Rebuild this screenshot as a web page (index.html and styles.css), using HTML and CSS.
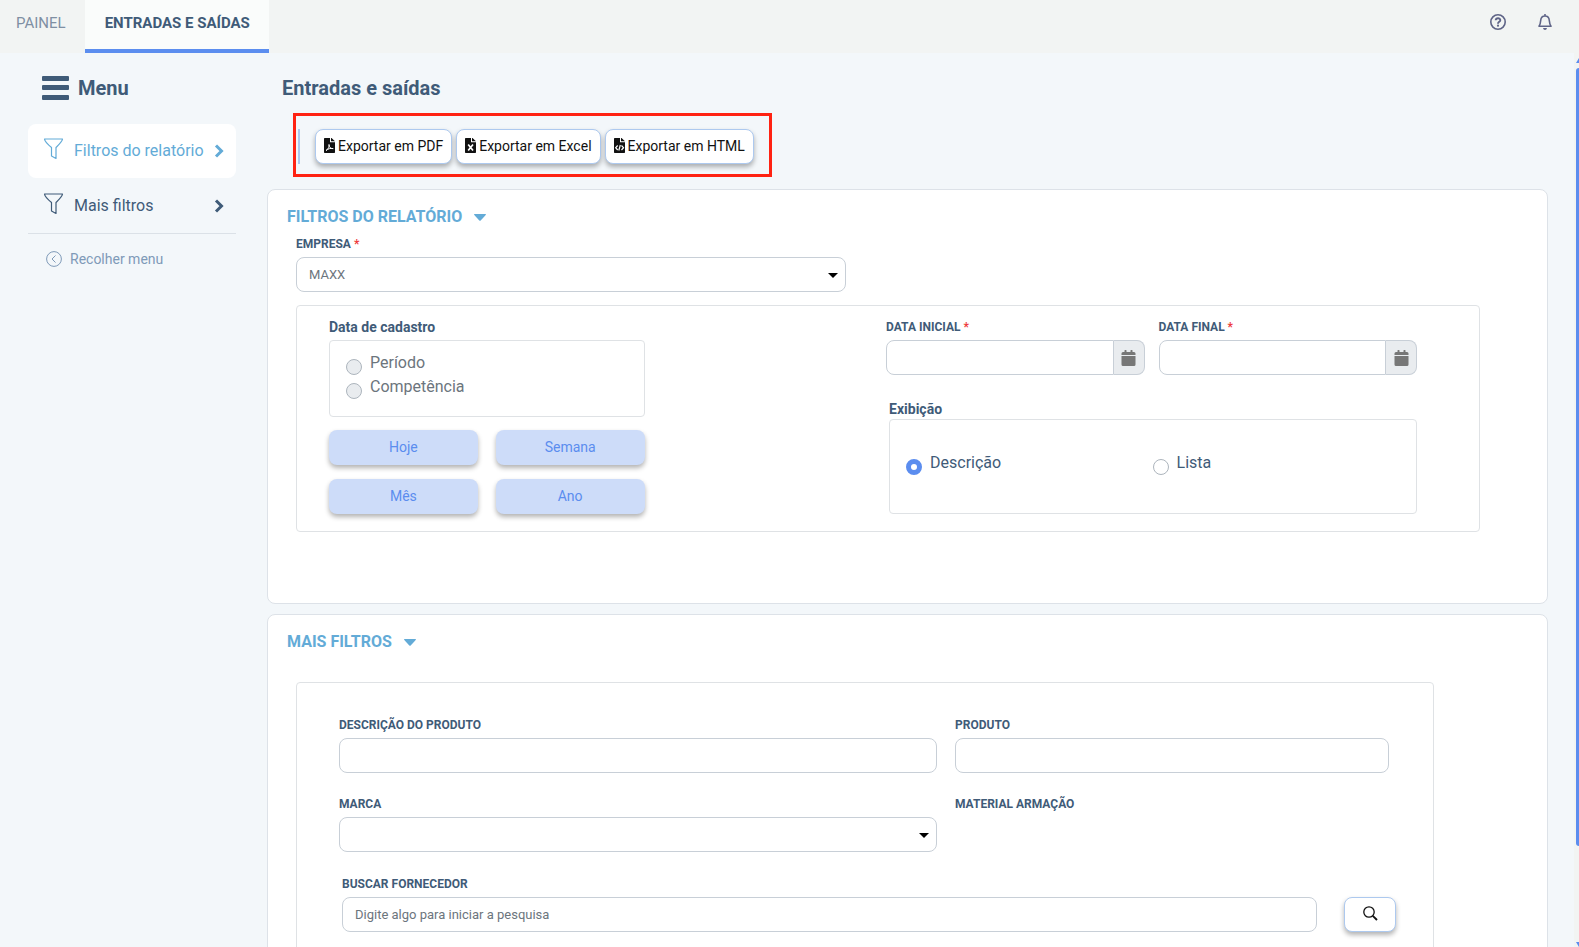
FILE: index.html
```html
<!DOCTYPE html>
<html lang="pt-BR">
<head>
<meta charset="utf-8">
<title>Entradas e saídas</title>
<link rel="stylesheet" href="styles.css">
</head>
<body>
<svg class="sprite" aria-hidden="true">
  <symbol id="funnel" viewBox="0 0 20 22"><path d="M1 1H19C18.800 3.500 15 7 12.500 9.500V20.500L8 18V9.500C5 7 1.200 3.500 1 1Z" fill="none" stroke="currentColor" stroke-width="1.200" stroke-linejoin="round"/></symbol>
  <symbol id="chevron" viewBox="0 0 10 14"><path d="M2 1.500L7.500 7L2 12.500" fill="none" stroke="currentColor" stroke-width="3"/></symbol>
  <symbol id="caret" viewBox="0 0 12 7"><path d="M0.500 0H11.500Q12.300 0.300 11.700 1L6.700 6.500Q6 7.100 5.300 6.500L0.300 1Q-0.300 0.300 0.500 0Z" fill="currentColor"/></symbol>
  <symbol id="calendar" viewBox="0 0 14 16"><path d="M1.500 2H3V0.500Q3 0 3.500 0H4.500Q5 0 5 0.500V2H9V0.500Q9 0 9.500 0H10.500Q11 0 11 0.500V2H12.500Q14 2 14 3.500V5H0V3.500Q0 2 1.500 2ZM0 6H14V14.500Q14 16 12.500 16H1.500Q0 16 0 14.500Z" fill="currentColor"/></symbol>
  <symbol id="sheet" viewBox="0 0 11 15"><path d="M0.700 0H6V4.300H11V14.300Q11 15 10.300 15H0.700Q0 15 0 14.300V0.700Q0 0 0.700 0ZM7 0H7.500L11 3.300H7Z" fill="currentColor"/></symbol>
</svg>

<header class="topbar">
  <nav class="tabs">
    <a class="tab" href="#painel">PAINEL</a>
    <a class="tab tab-active" href="#entradas">ENTRADAS E SAÍDAS</a>
  </nav>
  <div class="top-actions">
    <button type="button" class="icon-btn" aria-label="Ajuda"><svg width="16" height="16" viewBox="0 0 16 16" fill="none" stroke="currentColor"><circle cx="8" cy="8" r="7.200" stroke-width="1.600"/><path d="M5.700 6.300C5.900 3.500 10.300 3.600 10.300 6.200C10.300 7.900 8 7.800 8 9.700" stroke-width="1.900"/><circle cx="8" cy="11.700" r="1.100" fill="currentColor" stroke="none"/></svg></button>
    <button type="button" class="icon-btn" aria-label="Notificações"><svg width="14" height="16" viewBox="0 0 14 16" fill="none" stroke="currentColor"><path d="M7 0V2M1 12.300C2.300 10.500 2.500 9 2.700 6.500C2.900 3.500 4.700 2 7 2S11.100 3.500 11.300 6.500C11.500 9 11.700 10.500 13 12.300Z" stroke-width="1.600" stroke-linejoin="round"/><path d="M5 14H9Q8.600 16 7 16T5 14Z" fill="currentColor" stroke="none"/></svg></button>
  </div>
</header>

<div class="workspace">
  <aside class="sidebar">
    <h2 class="menu-title"><svg width="27" height="24" viewBox="0 0 27 24" fill="currentColor" aria-hidden="true"><rect width="27" height="5" rx="1"/><rect y="9" width="27" height="5" rx="1"/><rect y="19" width="27" height="5" rx="1"/></svg>Menu</h2>
    <nav class="side-nav">
      <a class="side-link side-link-active" href="#filtros"><svg class="funnel"><use href="#funnel"/></svg><span>Filtros do relatório</span><svg class="chevron"><use href="#chevron"/></svg></a>
      <a class="side-link" href="#mais"><svg class="funnel"><use href="#funnel"/></svg><span>Mais filtros</span><svg class="chevron"><use href="#chevron"/></svg></a>
    </nav>
    <button type="button" class="collapse"><svg width="16" height="16" viewBox="0 0 16 16" fill="none" stroke="currentColor" aria-hidden="true"><circle cx="8" cy="8" r="7.400"/><path d="M9.500 4.500L6 8L9.500 11.500"/></svg>Recolher menu</button>
  </aside>

  <main class="content">
    <h1 class="page-title">Entradas e saídas</h1>
    <div class="export-frame">
      <div class="export-bar">
        <button type="button" class="btn-outline"><svg class="file-icon" viewBox="0 0 11 15"><use href="#sheet"/><path d="M2 12.500C4.500 11 5.500 8.500 5 6.500C5 9 6.500 11 9.200 10.600C6.500 10 4 10.800 2 12.500" fill="none" stroke="#fff"/></svg>Exportar em PDF</button>
        <button type="button" class="btn-outline"><svg class="file-icon" viewBox="0 0 11 15"><use href="#sheet"/><path d="M3.200 6.500L8 12.500M8 6.500L3.200 12.500" fill="none" stroke="#fff" stroke-width="1.700"/></svg>Exportar em Excel</button>
        <button type="button" class="btn-outline"><svg class="file-icon" viewBox="0 0 11 15"><use href="#sheet"/><path d="M3.700 7.500L1.700 9.700L3.700 12M7.500 7.500L9.500 9.700L7.500 12M6.300 7L4.800 12.500" fill="none" stroke="#fff" stroke-width="1.200"/></svg>Exportar em HTML</button>
      </div>
    </div>

    <section class="card card-report" id="filtros">
      <h2 class="card-title">FILTROS DO RELATÓRIO<svg class="caret"><use href="#caret"/></svg></h2>
      <div class="field company">
        <label for="empresa">EMPRESA <span class="req">*</span></label>
        <div class="select-wrap"><select id="empresa"><option>MAXX</option></select><svg class="arrow" viewBox="0 0 10 5"><path d="M0 0H10L5 5Z"/></svg></div>
      </div>
      <div class="panel panel-dates">
        <div class="register">
          <fieldset class="group">
            <legend>Data de cadastro</legend>
            <div class="box box-period">
              <label class="choice muted"><input type="radio" name="data" disabled>Período</label>
              <label class="choice muted"><input type="radio" name="data" disabled>Competência</label>
            </div>
          </fieldset>
          <div class="quick">
            <button type="button" class="btn-soft">Hoje</button>
            <button type="button" class="btn-soft">Semana</button>
            <button type="button" class="btn-soft">Mês</button>
            <button type="button" class="btn-soft">Ano</button>
          </div>
        </div>
        <div class="range">
          <div class="dates">
            <div class="field">
              <label for="inicial">DATA INICIAL <span class="req">*</span></label>
              <div class="date"><input type="text" id="inicial"><button type="button" aria-label="Abrir calendário inicial"><svg class="calendar"><use href="#calendar"/></svg></button></div>
            </div>
            <div class="field">
              <label for="final">DATA FINAL <span class="req">*</span></label>
              <div class="date"><input type="text" id="final"><button type="button" aria-label="Abrir calendário final"><svg class="calendar"><use href="#calendar"/></svg></button></div>
            </div>
          </div>
          <fieldset class="group display">
            <legend>Exibição</legend>
            <div class="box box-display">
              <label class="choice"><input type="radio" name="exibicao" checked>Descrição</label>
              <label class="choice"><input type="radio" name="exibicao">Lista</label>
            </div>
          </fieldset>
        </div>
      </div>
    </section>

    <section class="card card-more" id="mais">
      <h2 class="card-title">MAIS FILTROS<svg class="caret"><use href="#caret"/></svg></h2>
      <div class="panel panel-more">
        <div class="product-grid">
          <div class="field"><label for="descricao">DESCRIÇÃO DO PRODUTO</label><input type="text" id="descricao"></div>
          <div class="field"><label for="produto">PRODUTO</label><input type="text" id="produto"></div>
          <div class="field"><label for="marca">MARCA</label><div class="select-wrap"><select id="marca"><option></option></select><svg class="arrow" viewBox="0 0 10 5"><path d="M0 0H10L5 5Z"/></svg></div></div>
          <div class="field"><span class="field-name">MATERIAL ARMAÇÃO</span></div>
        </div>
        <div class="supplier">
          <div class="field"><label for="fornecedor">BUSCAR FORNECEDOR</label><input type="text" id="fornecedor" placeholder="Digite algo para iniciar a pesquisa"></div>
          <button type="button" class="btn-outline btn-search" aria-label="Pesquisar"><svg width="15" height="15" viewBox="0 0 15 15" fill="none" stroke="currentColor"><circle cx="6" cy="6" r="5.200" stroke-width="1.300"/><path d="M9.800 9.800L14 14" stroke-width="1.900"/></svg></button>
        </div>
      </div>
    </section>
  </main>

  <div class="scrollbar" aria-hidden="true"><span class="scroll-up"></span><span class="scroll-thumb"></span><span class="scroll-down"></span></div>
</div>
</body>
</html>
```
FILE: styles.css
```css
* { box-sizing: border-box; }

body {
  margin: 0;
  height: 100vh;
  display: flex;
  flex-direction: column;
  overflow: hidden;
  background: #f3f7fa;
  color: #3f5b78;
  font: 14px/20px Roboto, sans-serif;
}

h1, h2, fieldset { margin: 0; padding: 0; border: 0; }
a { text-decoration: none; color: inherit; }
button, input, select { font: inherit; color: inherit; }
button { padding: 0; cursor: pointer; }
svg { flex: none; }
.sprite { position: absolute; width: 0; height: 0; }

/* Top bar */
.topbar { display: flex; justify-content: space-between; height: 53px; flex: none; background: #f2f4f3; }
.tabs { display: flex; }
.tab { padding: 13px 19px 0 16px; font-size: 15px; color: #7f8fa3; }
.tab-active { padding: 13px 19px 0 20px; background: #fafcfb; border-bottom: 4px solid #5b8def; color: #3f5b78; font-weight: 700; }
.top-actions { display: flex; align-items: flex-start; gap: 32px; padding: 14px 27px 0 0; }
.icon-btn { display: flex; border: 0; background: none; color: #5f6487; }

/* Sidebar */
.workspace { display: flex; flex: 1; min-height: 0; }
.sidebar { width: 239px; flex: none; padding: 23px 3px 0 28px; }
.menu-title { display: flex; align-items: center; gap: 9px; padding-left: 14px; font-size: 20px; line-height: 24px; }
.side-nav { display: flex; flex-direction: column; gap: 1px; margin-top: 24px; border-bottom: 1px solid #dbe1e7; }
.side-link { display: flex; align-items: center; height: 54px; padding: 0 12px 0 15px; border-radius: 8px; font-size: 16px; }
.side-link span { flex: 1; margin-left: 10px; }
.side-link-active { background: #fff; color: #63abd7; }
.funnel { width: 21px; height: 22px; margin-bottom: 4px; }
.chevron { width: 10px; height: 14px; }
.collapse { display: flex; align-items: center; gap: 8px; margin: 15px 0 0 18px; border: 0; background: none; color: #7f9ab8; }

/* Content */
.content { flex: 1; min-width: 0; margin: 0 26px 0 28px; overflow-y: auto; scrollbar-width: none; }
.page-title { margin: 23px 0 13px 15px; font-size: 20px; line-height: 24px; }
.export-frame { display: inline-flex; margin: 0 0 12px 26px; padding: 13px 15px 10px 2px; border: 3px solid #ff2212; vertical-align: top; }
.export-bar { display: flex; gap: 4px; padding-left: 15px; border-left: 2px solid #adc9ef; }
.btn-outline { display: flex; align-items: center; justify-content: center; gap: 3px; height: 35px; padding: 0 8px 2px; border: 1px solid #adc9ef; border-radius: 8px; background: #fff; box-shadow: 0 3px 5px rgba(0, 0, 0, .3); color: #111; }
.file-icon { width: 11px; height: 15px; }

.card { border: 1px solid #dde2e8; border-radius: 8px; background: #fff; padding: 17px 0 0 28px; }
.card-report { padding-bottom: 71px; }
.card-more { margin-top: 10px; padding-bottom: 40px; }
.card-title { display: flex; align-items: center; gap: 12px; margin-left: -9px; color: #63abd7; font-size: 16px; line-height: 20px; }
.caret { width: 12px; height: 7px; }
.panel { border: 1px solid #dfe2e5; border-radius: 4px; }

.field { display: flex; flex-direction: column; gap: 3px; min-width: 0; }
.field > label, .field-name { font-size: 12px; font-weight: 700; line-height: 20px; }
.req { color: #ee3b3b; }
input[type="text"], select { width: 100%; height: 35px; padding: 0 12px; border: 1px solid #c8cfd7; border-radius: 8px; background: #fff; font-size: 13px; outline: 0; }
input::placeholder { color: #6c757d; opacity: 1; }
select { appearance: none; color: #6c757d; }
.select-wrap { position: relative; }
.arrow { position: absolute; right: 8px; top: 16px; width: 10px; height: 5px; pointer-events: none; }

.company { width: 44%; min-width: 240px; margin-top: 7px; }
.panel-dates { display: flex; justify-content: space-between; margin: 13px 67px 0 0; padding: 11px 62px 17px 32px; }
.register { width: 29%; }
.group { min-width: 0; }
.group legend { padding: 0; font-weight: 700; line-height: 20px; }
.box { border: 1px solid #dfe2e5; border-radius: 4px; }
.box-period { margin-top: 3px; padding: 10px 16px 17px; }
.choice { display: flex; align-items: flex-start; gap: 8px; font-size: 16px; line-height: 24px; }
.choice input { appearance: none; width: 16px; height: 16px; margin: 8px 0 0; border: 1px solid #adb5bd; border-radius: 50%; background: #fff; }
.choice input:disabled { background: #e9ecef; }
.choice input:checked { border: 5px solid #5b8def; }
.muted { height: 24px; color: #6c757d; }
.quick { display: grid; grid-template-columns: 1fr 1fr; gap: 14px 18px; margin-top: 13px; }
.btn-soft { height: 35px; padding-bottom: 2px; border: 0; border-radius: 8px; background: #cddcf9; box-shadow: 0 3px 5px rgba(0, 0, 0, .3); color: #5b8def; }
.range { width: 48.8%; }
.dates { display: grid; grid-template-columns: 1fr 1fr; gap: 14px; }
.date { display: flex; }
.date input[type="text"] { border-radius: 8px 0 0 8px; min-width: 0; }
.date button { display: flex; align-items: center; justify-content: center; flex: none; width: 31px; border: 1px solid #c8cfd7; border-left: 0; border-radius: 0 8px 8px 0; background: #e9ecef; color: #777; }
.calendar { width: 15px; height: 16px; }
.display { margin: 24px 0 0 3px; }
.box-display { display: grid; grid-template-columns: 247fr 264fr; padding: 31px 0 38px 16px; }

.panel-more { margin: 30px 113px 0 0; padding: 32px 37px 40px 42px; }
.product-grid { display: grid; grid-template-columns: 598fr 434fr; gap: 21px 18px; padding-right: 7px; }
.supplier { display: flex; align-items: flex-end; gap: 27px; margin: 22px 0 0 3px; }
.supplier .field { flex: 1; }
.btn-search { width: 52px; }

/* Page scroll indicator */
.scrollbar { display: flex; flex-direction: column; align-items: flex-end; width: 5px; flex: none; padding: 5px 0 0; background: #f2f4f3; }
.scroll-up, .scroll-down { width: 3px; height: 5px; background: #5b8def; }
.scroll-up { clip-path: polygon(100% 0, 100% 100%, 0 100%); margin-bottom: 5px; }
.scroll-thumb { width: 3px; height: 87.5%; border-radius: 3px 0 0 3px; background: #5b8def; }
.scroll-down { clip-path: polygon(0 0, 100% 0, 100% 100%); margin-top: auto; }
```
